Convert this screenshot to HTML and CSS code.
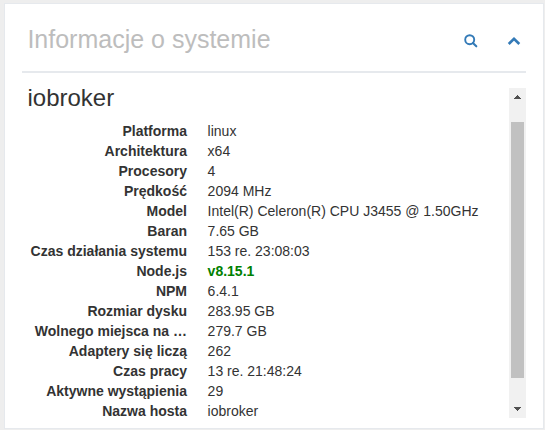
FILE: index.html
```html
<!DOCTYPE html>
<html lang="pl">
<head>
<meta charset="utf-8">
<title>Informacje o systemie</title>
<link rel="stylesheet" href="styles.css">
</head>
<body>
<section class="panel">
  <header class="panel-title">
    <h2>Informacje o systemie</h2>
    <div class="tools">
      <svg class="icon-search" width="14" height="14" viewBox="0 0 14 14"><circle cx="5.7" cy="5.7" r="4.5" fill="none" stroke="currentColor" stroke-width="1.9"/><path d="M8.9 8.9l3.4 3.4" stroke="currentColor" stroke-width="2.1" stroke-linecap="round"/></svg>
      <svg class="icon-up" width="14" height="9" viewBox="0 0 14 9"><path d="M1.7 7L7 1.9L12.3 7" fill="none" stroke="currentColor" stroke-width="2.7"/></svg>
    </div>
  </header>
  <div class="panel-content">
    <div class="host">
      <h1>iobroker</h1>
      <dl>
        <dt>Platforma</dt><dd>linux</dd>
        <dt>Architektura</dt><dd>x64</dd>
        <dt>Procesory</dt><dd>4</dd>
        <dt>Prędkość</dt><dd>2094 MHz</dd>
        <dt>Model</dt><dd>Intel(R) Celeron(R) CPU J3455 @ 1.50GHz</dd>
        <dt>Baran</dt><dd>7.65 GB</dd>
        <dt>Czas działania systemu</dt><dd>153 re. 23:08:03</dd>
        <dt>Node.js</dt><dd class="version">v8.15.1</dd>
        <dt>NPM</dt><dd>6.4.1</dd>
        <dt>Rozmiar dysku</dt><dd>283.95 GB</dd>
        <dt>Wolnego miejsca na …</dt><dd>279.7 GB</dd>
        <dt>Adaptery się liczą</dt><dd>262</dd>
        <dt>Czas pracy</dt><dd>13 re. 21:48:24</dd>
        <dt>Aktywne wystąpienia</dt><dd>29</dd>
        <dt>Nazwa hosta</dt><dd>iobroker</dd>
      </dl>
    </div>
    <div class="scrollbar">
      <svg width="7" height="4" viewBox="0 0 7 4" shape-rendering="crispEdges"><path d="M3 0h1v1h1v1h1v1h1v1H0V3h1V2h1V1h1z" fill="#505050"/></svg>
      <div class="thumb"></div>
      <svg width="7" height="4" viewBox="0 0 7 4" shape-rendering="crispEdges"><path d="M0 0h7v1H6v1H5v1H4v1H3V3H2V2H1V1H0z" fill="#505050"/></svg>
    </div>
  </div>
</section>
</body>
</html>
```
FILE: styles.css
```css
* { box-sizing: border-box; }

body {
  margin: 0;
  padding: 3px 1px 0 4px;
  height: 430px;
  overflow: hidden;
  background: #eee;
  color: #333;
  font: 14px/20px "Liberation Sans", Arial, sans-serif;
}

.panel {
  height: 426px;
  padding: 10px 17px;
  border: 1px solid #e6e9ed;
  background: #fff;
}

.panel-title {
  display: flex;
  justify-content: space-between;
  align-items: flex-start;
  height: 59px;
  padding: 10px 5px 0;
  border-bottom: 2px solid #e6e9ed;
}

h1, h2 { margin: 0; font-weight: 400; }

h2 {
  padding-left: 0.4px;
  font-size: 25px;
  line-height: 30px;
  color: #bdbdbd;
}

.tools {
  display: flex;
  align-items: center;
  gap: 29px;
  height: 34px;
  color: #337ab7;
}

.panel-content {
  display: flex;
  justify-content: space-between;
  padding-top: 12px;
}

.host { padding-left: 5px; }

h1 {
  padding-left: 0.5px;
  font-size: 24px;
  line-height: 26px;
}

dl {
  display: grid;
  grid-template-columns: 160px 290px;
  column-gap: 20.6px;
  margin: 10px 0 0;
}

dt {
  font-weight: 700;
  text-align: right;
  white-space: nowrap;
}

dd { margin: 0; white-space: nowrap; }

.version { color: green; font-weight: 700; }

.scrollbar {
  display: flex;
  flex-direction: column;
  align-items: center;
  width: 17px;
  height: 330px;
  margin-top: 3px;
  padding: 7px 2px;
  background: #f1f1f1;
}

.thumb {
  width: 13px;
  height: 256px;
  margin: 23px 0 auto;
  background: #c1c1c1;
}
```
